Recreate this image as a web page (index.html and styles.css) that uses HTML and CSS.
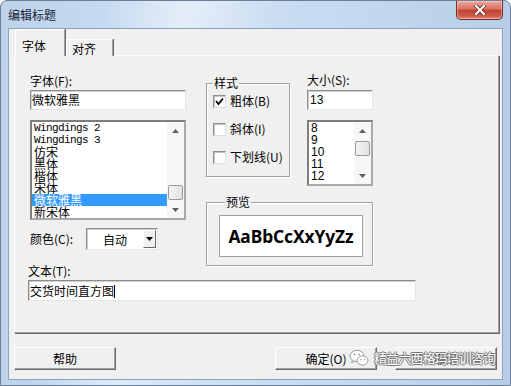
FILE: index.html
```html
<!DOCTYPE html>
<html lang="zh-CN">
<head>
<meta charset="UTF-8" />
<title>编辑标题</title>
<link rel="stylesheet" href="styles.css">
</head>
<body>

<div class="window">
  <!-- Title bar -->
  <div class="titlebar">
    <span class="title">编辑标题</span>
    <div class="close-btn">
      <svg width="12" height="10" viewBox="0 0 12 10">
        <path d="M2 1 L10 9 M10 1 L2 9" stroke="#5a1f18" stroke-width="3.6" stroke-linecap="square" />
        <path d="M2 1 L10 9 M10 1 L2 9" stroke="#fff" stroke-width="2.2" stroke-linecap="square" />
      </svg>
    </div>
  </div>

  <div class="client">
    <div class="tabs">
      <div class="tab active">字体</div>
      <div class="tab">对齐</div>
    </div>

    <div class="page">
      <!-- Font column -->
      <div class="col-left">
        <div class="label">字体(F):</div>
        <div class="textbox font-name">微软雅黑</div>
        <div class="listbox font-list">
          <ul class="items">
            <li class="latin">Wingdings 2</li>
            <li class="latin">Wingdings 3</li>
            <li>仿宋</li>
            <li>黑体</li>
            <li>楷体</li>
            <li>宋体</li>
            <li class="selected">微软雅黑</li>
            <li>新宋体</li>
          </ul>
          <div class="scrollbar">
            <div class="sb-arrow"><svg width="7" height="4" viewBox="0 0 7 4"><path d="M0 4 L3.5 0 L7 4 Z" fill="#5e5e5e"/></svg></div>
            <div class="sb-track"><div class="sb-thumb at-end"></div></div>
            <div class="sb-arrow"><svg width="7" height="4" viewBox="0 0 7 4"><path d="M0 0 L3.5 4 L7 0 Z" fill="#5e5e5e"/></svg></div>
          </div>
        </div>

        <div class="color-row">
          <span class="label color-label">颜色(C):</span>
          <div class="combo">
            <span class="combo-text">自动</span>
            <div class="combo-btn"><svg width="7" height="4" viewBox="0 0 7 4"><path d="M0 0 L3.5 4 L7 0 Z" fill="#000"/></svg></div>
          </div>
        </div>

        <div class="label text-label">文本(T):</div>
        <div class="textbox text-input">交货时间直方图<span class="caret"></span></div>
      </div>

      <!-- Style, size and preview -->
      <div class="col-right">
        <div class="top-row">
          <fieldset class="group style-group">
            <legend>样式</legend>
            <div class="check-rows">
              <div class="check-row">
                <span class="checkbox">
                  <svg width="9" height="9" viewBox="0 0 9 9"><path d="M1 4 L3.5 7 L8 1.5" stroke="#000" stroke-width="1.8" fill="none"/></svg>
                </span>
                粗体(B)
              </div>
              <div class="check-row"><span class="checkbox"></span>斜体(I)</div>
              <div class="check-row"><span class="checkbox"></span>下划线(U)</div>
            </div>
          </fieldset>

          <div class="size-col">
            <div class="label">大小(S):</div>
            <div class="textbox size-input">13</div>
            <div class="listbox size-list">
              <ul class="items">
                <li>8</li>
                <li>9</li>
                <li>10</li>
                <li>11</li>
                <li>12</li>
              </ul>
              <div class="scrollbar">
                <div class="sb-arrow"><svg width="7" height="4" viewBox="0 0 7 4"><path d="M0 4 L3.5 0 L7 4 Z" fill="#5e5e5e"/></svg></div>
                <div class="sb-track"><div class="sb-thumb"></div></div>
                <div class="sb-arrow"><svg width="7" height="4" viewBox="0 0 7 4"><path d="M0 0 L3.5 4 L7 0 Z" fill="#5e5e5e"/></svg></div>
              </div>
            </div>
          </div>
        </div>

        <fieldset class="group preview-group">
          <legend>预览</legend>
          <div class="preview">AaBbCcXxYyZz</div>
        </fieldset>
      </div>
    </div>

    <div class="buttons">
      <button class="btn">帮助</button>
      <button class="btn ok-btn">确定(O)</button>
      <button class="btn cancel-btn">取消</button>
    </div>

    <!-- Watermark over the buttons -->
    <div class="watermark">
      <svg width="20" height="18" viewBox="0 0 20 18">
        <ellipse cx="8" cy="7" rx="7" ry="5.6" fill="#fff" stroke="#9a9a9a" stroke-width="1"/>
        <path d="M3.5 11 L2.5 14 L6 12" fill="#fff" stroke="#9a9a9a" stroke-width="1"/>
        <ellipse cx="13.5" cy="11.5" rx="5.5" ry="4.5" fill="#fff" stroke="#9a9a9a" stroke-width="1"/>
        <circle cx="5.5" cy="5.5" r="0.9" fill="#9a9a9a"/>
        <circle cx="10" cy="5.5" r="0.9" fill="#9a9a9a"/>
        <circle cx="12" cy="10.5" r="0.7" fill="#9a9a9a"/>
        <circle cx="15.5" cy="10.5" r="0.7" fill="#9a9a9a"/>
      </svg>
      <span class="wm-text">精益六西格玛培训咨询</span>
    </div>
  </div>
</div>

</body>
</html>
```

FILE: styles.css
```css
/* Page */
body {
  margin: 0;
  font-family: "Noto Sans CJK SC", sans-serif;
  font-size: 12px;
  color: #000;
}

/* Window frame (Aero) */
.window {
  width: 511px;
  height: 386px;
  box-sizing: border-box;
  border: 1px solid #6b7f99;
  border-radius: 7px 7px 0 0;
  background:
    linear-gradient(100deg, rgba(255,255,255,0) 18%, rgba(255,255,255,0.45) 32%, rgba(255,255,255,0) 48%),
    linear-gradient(to right, #bcd3ec, #cfe0f3 40%, #c4d9ef 70%, #b6cee9);
  display: flex;
  flex-direction: column;
  overflow: hidden;
}

.titlebar {
  height: 27px;
  display: flex;
  align-items: flex-start;
  padding: 0 7px 0 7px;
}

.title {
  margin-top: 7px;
  line-height: 14px;
  color: #1b2430;
}

.close-btn {
  margin-left: auto;
  width: 45px;
  height: 18px;
  border: 1px solid #7a2a20;
  border-top: none;
  border-radius: 0 0 5px 5px;
  background: linear-gradient(#eba99b, #d7705f 45%, #c2402f 52%, #cf5e4c 85%, #e0907f);
  display: flex;
  justify-content: center;
  align-items: center;
  box-shadow: inset 0 0 0 1px rgba(255,255,255,0.35);
}

/* Client area */
.client {
  position: relative;
  margin: 0 7px;
  height: 352px;
  box-sizing: border-box;
  border: 1px solid #8ea3bd;
  background: #f0f0f0;
  padding: 0 3px 0 5px;
}

/* Tabs */
.tabs {
  display: flex;
  align-items: flex-end;
  height: 27px;
  padding-left: 1px;
  margin-bottom: -1px;
  position: relative;
  z-index: 1;
}

.tab {
  box-sizing: border-box;
  height: 17px;
  width: 47px;
  padding: 2px 0 0 5px;
  line-height: 14px;
  border-top: 1px solid #fff;
  border-left: 1px solid #fff;
  border-right: 1px solid #a0a0a0;
  box-shadow: 1px 0 0 #696969;
  background: #f0f0f0;
}

.tab.active {
  height: 27px;
  width: 50px;
  padding: 9px 0 0 6px;
  margin-right: 1px;
}

.page {
  box-sizing: border-box;
  height: 278px;
  border: 1px solid;
  border-color: #fff #a0a0a0 #a0a0a0 #fff;
  box-shadow: 1px 1px 0 #696969;
  display: flex;
  align-items: flex-start;
  padding-left: 15px;
}

.label {
  line-height: 14px;
  white-space: nowrap;
}

/* Text boxes and lists */
.textbox {
  box-sizing: border-box;
  background: #fff;
  border: 1px solid;
  border-color: #8c8c8c #e6e6e6 #e6e6e6 #8c8c8c;
  box-shadow: inset 1px 1px 0 #cfcfcf;
  line-height: 18px;
  padding-left: 1px;
  white-space: nowrap;
}

.listbox {
  box-sizing: border-box;
  background: #fff;
  border: 2px solid;
  border-color: #7e7e7e #a8a8a8 #a8a8a8 #7e7e7e;
  display: flex;
}

.items {
  list-style: none;
  margin: 0;
  padding: 0;
  flex: 1;
}

.items li {
  height: 12px;
  line-height: 12px;
  padding-left: 2px;
  white-space: nowrap;
}

.items li.latin {
  font-family: "Liberation Mono", monospace;
  font-size: 11px;
  letter-spacing: -0.6px;
}

.items li.selected {
  background: #3399ff;
  color: #fff;
}

.scrollbar {
  width: 17px;
  display: flex;
  flex-direction: column;
  background: #f7f7f7;
}

.sb-arrow {
  height: 17px;
  display: flex;
  justify-content: center;
  align-items: center;
}

.sb-track {
  flex: 1;
  display: flex;
  flex-direction: column;
  align-items: center;
}

.sb-thumb {
  box-sizing: border-box;
  width: 15px;
  height: 15px;
  margin-top: 2px;
  border: 1px solid #999;
  border-radius: 2px;
  background: linear-gradient(to right, #f3f3f3, #e2e2e2);
}

.sb-thumb.at-end {
  margin-top: auto;
  margin-bottom: 1px;
}

/* Left column */
.col-left {
  width: 156px;
  flex-shrink: 0;
}

.col-left > .label:first-child {
  margin-top: 18px;
}

.font-name {
  margin-top: 2px;
  height: 20px;
}

.font-list {
  margin-top: 10px;
  height: 100px;
}

.color-row {
  margin-top: 8px;
  display: flex;
  align-items: center;
  height: 22px;
}

.color-label {
  width: 56px;
}

.combo {
  box-sizing: border-box;
  width: 72px;
  height: 22px;
  background: #fff;
  border: 1px solid;
  border-color: #8c8c8c #e6e6e6 #e6e6e6 #8c8c8c;
  box-shadow: inset 1px 1px 0 #cfcfcf;
  display: flex;
  align-items: center;
  padding-right: 1px;
}

.combo-text {
  flex: 1;
  text-align: center;
}

.combo-btn {
  box-sizing: border-box;
  width: 13px;
  height: 18px;
  background: #f0f0f0;
  border: 1px solid;
  border-color: #fff #696969 #696969 #fff;
  display: flex;
  justify-content: center;
  align-items: center;
}

.text-label {
  margin-top: 14px;
  margin-left: -2px;
}

.text-input {
  margin-top: 2px;
  margin-left: -2px;
  width: 388px;
  height: 21px;
  line-height: 19px;
}

.caret {
  display: inline-block;
  width: 1px;
  height: 13px;
  background: #000;
  vertical-align: -2px;
}

/* Right column */
.col-right {
  margin-left: 20px;
  width: 167px;
}

.top-row {
  display: flex;
  align-items: flex-start;
}

.group {
  margin: 0;
  padding: 0;
  box-sizing: border-box;
  border: 1px solid #a0a0a0;
  box-shadow: 1px 1px 0 #fff, inset 1px 1px 0 #fff;
}

.group legend {
  margin-left: 6px;
  padding: 0 1px;
  line-height: 14px;
}

.style-group {
  margin-top: 20px;
  width: 84px;
  height: 101px;
}

.check-rows {
  padding: 4px 0 0 6px;
  display: flex;
  flex-direction: column;
  gap: 14px;
}

.check-row {
  display: flex;
  align-items: center;
  gap: 4px;
  line-height: 14px;
  white-space: nowrap;
}

.checkbox {
  box-sizing: border-box;
  width: 13px;
  height: 13px;
  background: #fff;
  border: 1px solid;
  border-color: #8e8e8e #dedede #dedede #8e8e8e;
  box-shadow: inset 1px 1px 0 #c4c4c4;
  display: flex;
  justify-content: center;
  align-items: center;
}

.size-col {
  margin-left: 17px;
  margin-top: 17px;
  width: 66px;
}

.size-input {
  margin-top: 3px;
  height: 20px;
  padding-left: 2px;
  font-family: "Liberation Sans", sans-serif;
}

.size-list {
  margin-top: 10px;
  height: 66px;
  font-family: "Liberation Sans", sans-serif;
}

.size-list .items li {
  font-size: 12px;
}

.preview-group {
  margin-top: 9px;
  width: 167px;
  padding: 6px 0 8px 12px;
}

.preview {
  box-sizing: border-box;
  width: 144px;
  height: 42px;
  background: #fff;
  border: 1px solid #a0a0a0;
  display: flex;
  justify-content: center;
  align-items: center;
  font-family: "Noto Sans", sans-serif;
  font-weight: bold;
  font-size: 17.4px;
  letter-spacing: -0.1px;
}

/* Bottom buttons */
.buttons {
  display: flex;
  margin-top: 14px;
  margin-right: 2px;
}

.btn {
  box-sizing: border-box;
  width: 102px;
  height: 23px;
  padding: 0;
  font-family: "Noto Sans CJK SC", sans-serif;
  font-size: 12px;
  background: #f0f0f0;
  border: 1px solid;
  border-color: #fff #696969 #696969 #fff;
  box-shadow: inset -1px -1px 0 #a0a0a0;
  color: #000;
}

.ok-btn {
  margin-left: auto;
}

.cancel-btn {
  margin-left: 18px;
}

/* Watermark */
.watermark {
  position: absolute;
  left: 340px;
  top: 319px;
  display: flex;
  align-items: center;
  gap: 5px;
}

.wm-text {
  font-size: 13px;
  color: #fff;
  letter-spacing: -0.9px;
  text-shadow: 1px 0 0 #777, -1px 0 0 #777, 0 1px 0 #777, 0 -1px 0 #777;
}
```
